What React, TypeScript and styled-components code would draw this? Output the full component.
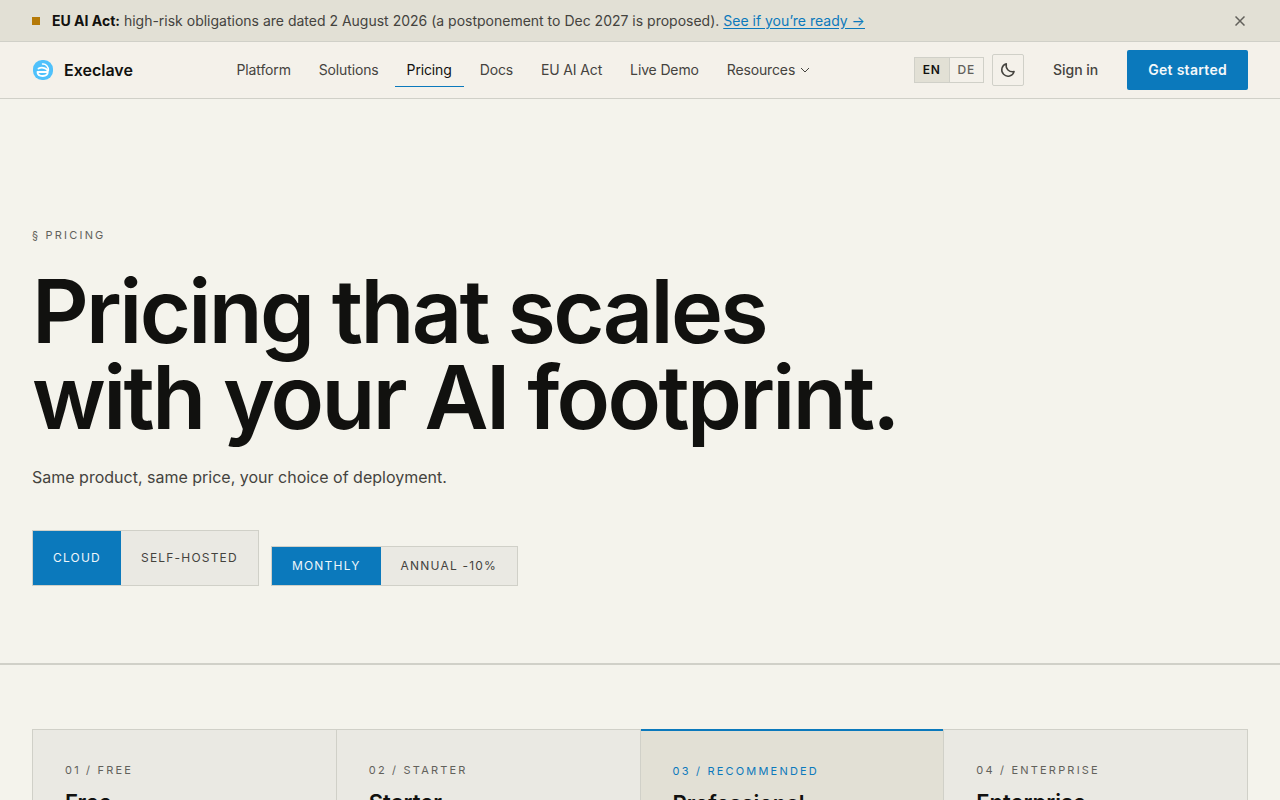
import React, { useState } from "react";
import styled, { createGlobalStyle } from "styled-components";

const color = {
  page: "#f4f3ec",
  nav: "#f4f1ea",
  panel: "#eae9e3",
  sand: "#e2e0d5",
  line: "#d0d0c8",
  ink: "#11110f",
  body: "#44433e",
  muted: "#62615b",
  blue: "#0b79bc",
  amber: "#b57a08",
};

const GlobalStyle = createGlobalStyle`
  *, *::before, *::after { box-sizing: border-box; }
  body {
    margin: 0;
    background: ${color.page};
    color: ${color.ink};
    font-family: Inter, "Liberation Sans", sans-serif;
    font-size: 14px;
    line-height: 20px;
  }
  button { font: inherit; margin: 0; cursor: pointer; }
  h1, h2, p { margin: 0; }
`;

const Banner = styled.aside`
  display: flex;
  align-items: center;
  gap: 12px;
  min-height: 42px;
  padding: 0 32px;
  background: ${color.sand};
  border-bottom: 1px solid ${color.line};
`;

const BannerMark = styled.span`
  width: 8px;
  height: 8px;
  background: ${color.amber};
`;

const BannerText = styled.p`
  flex: 1;
  color: ${color.body};

  strong { color: ${color.ink}; font-weight: 700; }
  a { color: ${color.blue}; text-decoration: underline; text-underline-offset: 2px; }
`;

const CloseButton = styled.button`
  display: grid;
  place-items: center;
  width: 16px;
  height: 16px;
  padding: 0;
  border: 0;
  background: none;
  color: ${color.muted};
`;

const Header = styled.header`
  display: flex;
  align-items: center;
  justify-content: space-between;
  height: 57px;
  padding: 0 32px;
  background: ${color.nav};
  border-bottom: 1px solid ${color.line};
`;

const Brand = styled.a`
  display: flex;
  align-items: center;
  gap: 10px;
  color: ${color.ink};
  font-size: 16px;
  font-weight: 600;
  text-decoration: none;
`;

const NavList = styled.nav`
  display: flex;
  gap: 4px;
`;

const NavLink = styled.a<{ $active?: boolean }>`
  display: flex;
  align-items: center;
  gap: 5px;
  height: 33px;
  padding: 0 12px;
  border-bottom: 1px solid ${(p) => (p.$active ? color.blue : "transparent")};
  color: ${(p) => (p.$active ? color.ink : color.body)};
  letter-spacing: -0.01em;
  text-decoration: none;
`;

const Actions = styled.div`
  display: flex;
  align-items: center;
  gap: 8px;
`;

const LanguageSwitch = styled.div`
  display: flex;
  height: 26px;
  border: 1px solid ${color.line};
`;

const LanguageButton = styled.button<{ $active: boolean }>`
  padding: 0 8px;
  border: 0;
  background: ${(p) => (p.$active ? color.sand : "transparent")};
  color: ${(p) => (p.$active ? color.ink : color.muted)};
  font-size: 12px;
  font-weight: ${(p) => (p.$active ? 600 : 500)};
  letter-spacing: 0.06em;

  & + & { border-left: 1px solid ${color.line}; }
`;

const ThemeButton = styled.button`
  display: grid;
  place-items: center;
  width: 32px;
  height: 32px;
  padding: 0;
  border: 1px solid ${color.line};
  border-radius: 2px;
  background: transparent;
  color: ${color.body};
`;

const SignIn = styled.a`
  padding: 0 21px;
  color: ${color.body};
  font-weight: 500;
  text-decoration: none;
`;

const GetStarted = styled.a`
  display: flex;
  align-items: center;
  height: 40px;
  padding: 0 21px;
  border-radius: 2px;
  background: ${color.blue};
  color: #f4f8fa;
  font-weight: 600;
  letter-spacing: 0.02em;
  text-decoration: none;
`;

const Hero = styled.section`
  padding: 128px 32px 77px;
  border-bottom: 2px solid ${color.line};
`;

const Label = styled.p<{ $accent?: boolean }>`
  color: ${(p) => (p.$accent ? color.blue : color.muted)};
  font-size: 11px;
  line-height: 16px;
  letter-spacing: 0.2em;
  text-transform: uppercase;
`;

const Title = styled.h1`
  margin-top: 25px;
  font-size: 88px;
  line-height: 86px;
  font-weight: 600;
  letter-spacing: -0.03em;
`;

const Lead = styled.p`
  margin-top: 23px;
  color: ${color.body};
  font-size: 16px;
  line-height: 28px;
`;

const Toggles = styled.div`
  display: flex;
  flex-wrap: wrap;
  align-items: flex-end;
  gap: 12px;
  margin-top: 39px;
`;

const Segmented = styled.div<{ $tall?: boolean }>`
  display: flex;
  height: ${(p) => (p.$tall ? 56 : 40)}px;
  border: 1px solid ${color.line};
  background: ${color.panel};
`;

const Segment = styled.button<{ $active: boolean }>`
  padding: 0 20px;
  border: 0;
  background: ${(p) => (p.$active ? color.blue : "transparent")};
  color: ${(p) => (p.$active ? "#eef6fa" : color.body)};
  font-size: 12px;
  letter-spacing: 0.1em;
  text-transform: uppercase;
`;

const Plans = styled.section`
  padding: 64px 32px;
`;

const PlanGrid = styled.div`
  display: grid;
  grid-template-columns: repeat(4, 1fr);
  gap: 1px;
  border: 1px solid ${color.line};
  background: ${color.line};
`;

const Plan = styled.article<{ $featured?: boolean }>`
  min-height: 240px;
  padding: 32px;
  background: ${(p) => (p.$featured ? color.sand : color.panel)};
  border-top: ${(p) => (p.$featured ? `2px solid ${color.blue}` : "0")};
  margin-top: ${(p) => (p.$featured ? "-1px" : "0")};
`;

const PlanName = styled.h2`
  margin-top: 8px;
  font-size: 22px;
  line-height: 32px;
  font-weight: 600;
`;

const navItems = ["Platform", "Solutions", "Pricing", "Docs", "EU AI Act", "Live Demo"];

const plans = [
  { label: "01 / Free", name: "Free" },
  { label: "02 / Starter", name: "Starter" },
  { label: "03 / Recommended", name: "Professional", featured: true },
  { label: "04 / Enterprise", name: "Enterprise" },
];

const Logo = () => (
  <svg width="22" height="22" viewBox="0 0 22 22" aria-hidden="true">
    <rect x="1" y="1" width="20" height="20" rx="9" fill="#4fc1fb" />
    <g fill="none" stroke="#fff" strokeLinecap="round" strokeLinejoin="round">
      <path d="M6.500 9.500C9.500 8 15.800 8.600 15.800 12.800C15.800 15.800 13.300 17 10.800 17C8 17 5.500 15.800 5.500 13H15.500" strokeWidth="1.800" />
      <path d="M10.500 5C14 4.700 16.600 7.500 16.400 11.500" strokeWidth="1.500" />
    </g>
  </svg>
);

const Moon = () => (
  <svg width="16" height="16" viewBox="0 0 16 16" fill="none" stroke="currentColor" strokeWidth="1.500" strokeLinejoin="round" aria-hidden="true">
    <path d="M6.300 1.800C5.300 6.700 9.200 10.600 14.100 9.600A6.300 6.300 0 1 1 6.300 1.800Z" />
  </svg>
);

const Chevron = () => (
  <svg width="10" height="10" viewBox="0 0 10 10" fill="none" stroke="currentColor" aria-hidden="true">
    <path d="M1 3L5 7L9 3" />
  </svg>
);

const Cross = () => (
  <svg width="10" height="10" viewBox="0 0 10 10" fill="none" stroke="currentColor" strokeWidth="1.500" aria-hidden="true">
    <path d="M0.500 0.500L9.500 9.500M9.500 0.500L0.500 9.500" />
  </svg>
);

export default function App() {
  const [bannerOpen, setBannerOpen] = useState(true);
  const [language, setLanguage] = useState("EN");
  const [deployment, setDeployment] = useState("Cloud");
  const [billing, setBilling] = useState("Monthly");

  return (
    <>
      <GlobalStyle />
      {bannerOpen && (
        <Banner>
          <BannerMark />
          <BannerText>
            <strong>EU AI Act:</strong> high-risk obligations are dated 2 August 2026 (a postponement to Dec 2027 is
            proposed). <a href="#ready">See if you’re ready →</a>
          </BannerText>
          <CloseButton aria-label="Dismiss" onClick={() => setBannerOpen(false)}>
            <Cross />
          </CloseButton>
        </Banner>
      )}
      <Header>
        <Brand href="#home">
          <Logo />
          Execlave
        </Brand>
        <NavList>
          {navItems.map((item) => (
            <NavLink key={item} href="#nav" $active={item === "Pricing"}>
              {item}
            </NavLink>
          ))}
          <NavLink href="#resources">
            Resources
            <Chevron />
          </NavLink>
        </NavList>
        <Actions>
          <LanguageSwitch>
            {["EN", "DE"].map((code) => (
              <LanguageButton key={code} $active={language === code} onClick={() => setLanguage(code)}>
                {code}
              </LanguageButton>
            ))}
          </LanguageSwitch>
          <ThemeButton aria-label="Dark theme">
            <Moon />
          </ThemeButton>
          <SignIn href="#signin">Sign in</SignIn>
          <GetStarted href="#start">Get started</GetStarted>
        </Actions>
      </Header>
      <main>
        <Hero>
          <Label>§ Pricing</Label>
          <Title>
            Pricing that scales
            <br />
            with your AI footprint.
          </Title>
          <Lead>Same product, same price, your choice of deployment.</Lead>
          <Toggles>
            <Segmented $tall>
              {["Cloud", "Self-hosted"].map((item) => (
                <Segment key={item} $active={deployment === item} onClick={() => setDeployment(item)}>
                  {item}
                </Segment>
              ))}
            </Segmented>
            <Segmented>
              {["Monthly", "Annual -10%"].map((item) => (
                <Segment key={item} $active={billing === item} onClick={() => setBilling(item)}>
                  {item}
                </Segment>
              ))}
            </Segmented>
          </Toggles>
        </Hero>
        <Plans>
          <PlanGrid>
            {plans.map((plan) => (
              <Plan key={plan.name} $featured={plan.featured}>
                <Label $accent={plan.featured}>{plan.label}</Label>
                <PlanName>{plan.name}</PlanName>
              </Plan>
            ))}
          </PlanGrid>
        </Plans>
      </main>
    </>
  );
}
